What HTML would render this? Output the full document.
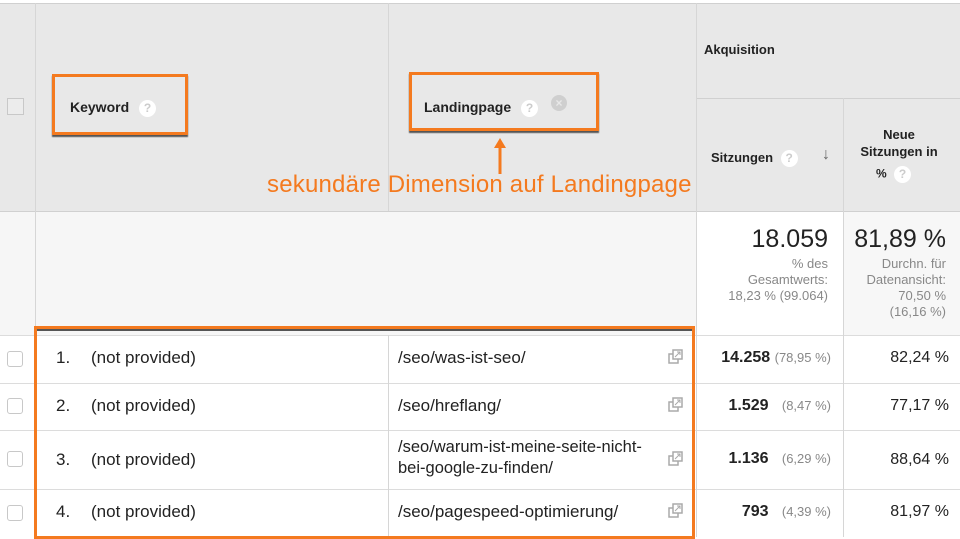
<!DOCTYPE html>
<html><head><meta charset="utf-8"><style>
*{margin:0;padding:0;box-sizing:border-box}
body{width:960px;height:537px;overflow:hidden;background:#fff;font-family:"Liberation Sans",Arial,sans-serif;position:relative;color:#222}
.a{position:absolute}
.vl{position:absolute;width:1px;background:#d6d6d6}
.hl{position:absolute;height:1px;background:#dcdcdc}
.q{display:inline-block;width:17px;height:17px;border-radius:50%;background:#fff;color:#ccc;font-size:12px;text-align:center;line-height:17px;font-weight:bold;vertical-align:middle}
.hd{font-weight:bold;font-size:14px;color:#222}
.cb{position:absolute;left:7px;width:16px;height:16px;border:1px solid #c8c8c8;border-radius:3px;background:#fff}
.t{position:absolute;font-size:17px;color:#222}
.ic{position:absolute;left:668px;width:15px;height:15px}
</style></head><body>
<div class="a" style="left:0;top:3px;width:960px;height:208px;background:#e8e8e8"></div>
<div class="hl" style="left:0;top:3px;width:960px;background:#d0d0d0"></div>
<div class="a" style="left:0;top:211px;width:696px;height:124px;background:#f6f6f6"></div>
<div class="a" style="left:843px;top:211px;width:117px;height:124px;background:#f7f7f7"></div>
<div class="hl" style="left:0;top:211px;width:960px;background:#d0d0d0"></div>
<div class="hl" style="left:696px;top:98px;width:264px;background:#d0d0d0"></div>
<div class="hl" style="left:0;top:335px;width:960px"></div>
<div class="hl" style="left:0;top:383px;width:960px"></div>
<div class="hl" style="left:0;top:430px;width:960px"></div>
<div class="hl" style="left:0;top:489px;width:960px"></div>
<div class="vl" style="left:35px;top:3px;height:534px"></div>
<div class="vl" style="left:388px;top:3px;height:208px"></div>
<div class="vl" style="left:388px;top:335px;height:202px"></div>
<div class="vl" style="left:696px;top:3px;height:534px"></div>
<div class="vl" style="left:843px;top:98px;height:439px"></div>
<div class="cb" style="top:98px;width:17px;height:17px;border-radius:0;background:#ececec"></div>

<div class="a" style="left:52px;top:74px;width:136px;height:61px;border:3px solid #f47a1f;box-shadow:0 2px 1px #555"></div>
<div class="a hd" style="left:70px;top:99px">Keyword <span class="q" style="margin-left:6px">?</span></div>
<div class="a" style="left:409px;top:72px;width:190px;height:59px;border:3px solid #f47a1f;box-shadow:0 2px 1px #555"></div>
<div class="a hd" style="left:424px;top:99px">Landingpage <span class="q" style="margin-left:6px">?</span></div>
<div class="a" style="left:551px;top:95px;width:16px;height:16px;border-radius:50%;background:#cfcfcf;color:#e8e8e8;font-size:12px;text-align:center;line-height:16px;font-weight:bold">×</div>
<svg class="a" style="left:492px;top:136px" width="16" height="40"><path d="M8 38V6" stroke="#f47a1f" stroke-width="3"/><path d="M2 12L8 2L14 12Z" fill="#f47a1f"/></svg>
<div class="a" style="left:267px;top:171px;font-size:24px;color:#f47a1f;letter-spacing:0.2px;white-space:nowrap">sekundäre Dimension auf Landingpage</div>

<div class="a hd" style="left:704px;top:42px;font-size:13px">Akquisition</div>
<div class="a hd" style="left:711px;top:150px;font-size:13px">Sitzungen <span class="q" style="margin-left:4px">?</span></div>
<div class="a" style="left:822px;top:146px;color:#666;font-size:16px;font-weight:bold">↓</div>
<div class="a hd" style="left:845px;top:126px;width:108px;text-align:center;font-size:13px;line-height:17px">Neue<br>Sitzungen in</div>
<div class="a hd" style="left:876px;top:166px;font-size:12px">% <span class="q" style="margin-left:4px">?</span></div>

<div class="a" style="left:700px;top:225px;width:128px;text-align:right;font-size:25px;color:#222">18.059</div>
<div class="a" style="left:700px;top:256px;width:128px;text-align:right;font-size:13px;color:#888;line-height:16px">% des<br>Gesamtwerts:<br>18,23 % (99.064)</div>
<div class="a" style="left:845px;top:225px;width:101px;text-align:right;font-size:25px;color:#222">81,89 %</div>
<div class="a" style="left:845px;top:256px;width:101px;text-align:right;font-size:13px;color:#888;line-height:16px">Durchn. für<br>Datenansicht:<br>70,50 %<br>(16,16 %)</div>

<div class="cb" style="top:351px"></div><div class="cb" style="top:398px"></div><div class="cb" style="top:451px"></div><div class="cb" style="top:505px"></div>
<div class="t" style="left:56px;top:348px">1.</div><div class="t" style="left:91px;top:348px">(not provided)</div><div class="t" style="left:398px;top:348px">/seo/was-ist-seo/</div>
<div class="t" style="left:56px;top:396px">2.</div><div class="t" style="left:91px;top:396px">(not provided)</div><div class="t" style="left:398px;top:396px">/seo/hreflang/</div>
<div class="t" style="left:56px;top:450px">3.</div><div class="t" style="left:91px;top:450px">(not provided)</div><div class="t" style="left:398px;top:437px;line-height:21px;font-size:16.5px">/seo/warum-ist-meine-seite-nicht-<br>bei-google-zu-finden/</div>
<div class="t" style="left:56px;top:502px">4.</div><div class="t" style="left:91px;top:502px">(not provided)</div><div class="t" style="left:398px;top:502px">/seo/pagespeed-optimierung/</div>
<svg class="ic" style="top:349px" viewBox="0 0 15 15"><rect x="1" y="5" width="9" height="9" fill="none" stroke="#aaa" stroke-width="1.5"/><rect x="5" y="1" width="9" height="9" fill="#fff" stroke="#aaa" stroke-width="1.5"/><path d="M7 8L12 3M9 3h3v3" stroke="#aaa" fill="none"/></svg>
<svg class="ic" style="top:397px" viewBox="0 0 15 15"><rect x="1" y="5" width="9" height="9" fill="none" stroke="#aaa" stroke-width="1.5"/><rect x="5" y="1" width="9" height="9" fill="#fff" stroke="#aaa" stroke-width="1.5"/><path d="M7 8L12 3M9 3h3v3" stroke="#aaa" fill="none"/></svg>
<svg class="ic" style="top:451px" viewBox="0 0 15 15"><rect x="1" y="5" width="9" height="9" fill="none" stroke="#aaa" stroke-width="1.5"/><rect x="5" y="1" width="9" height="9" fill="#fff" stroke="#aaa" stroke-width="1.5"/><path d="M7 8L12 3M9 3h3v3" stroke="#aaa" fill="none"/></svg>
<svg class="ic" style="top:503px" viewBox="0 0 15 15"><rect x="1" y="5" width="9" height="9" fill="none" stroke="#aaa" stroke-width="1.5"/><rect x="5" y="1" width="9" height="9" fill="#fff" stroke="#aaa" stroke-width="1.5"/><path d="M7 8L12 3M9 3h3v3" stroke="#aaa" fill="none"/></svg>

<div class="a" style="left:700px;top:349px;width:131px;text-align:right;font-size:16px;white-space:nowrap"><b>14.258</b> <span style="font-size:13px;color:#888">(78,95 %)</span></div>
<div class="a" style="left:700px;top:397px;width:131px;text-align:right;font-size:16px;white-space:nowrap"><b>1.529</b>&nbsp;&nbsp; <span style="font-size:13px;color:#888">(8,47 %)</span></div>
<div class="a" style="left:700px;top:450px;width:131px;text-align:right;font-size:16px;white-space:nowrap"><b>1.136</b>&nbsp;&nbsp; <span style="font-size:13px;color:#888">(6,29 %)</span></div>
<div class="a" style="left:700px;top:503px;width:131px;text-align:right;font-size:16px;white-space:nowrap"><b>793</b>&nbsp;&nbsp; <span style="font-size:13px;color:#888">(4,39 %)</span></div>
<div class="t" style="left:845px;top:349px;width:104px;text-align:right;font-size:16px">82,24 %</div>
<div class="t" style="left:845px;top:397px;width:104px;text-align:right;font-size:16px">77,17 %</div>
<div class="t" style="left:845px;top:451px;width:104px;text-align:right;font-size:16px">88,64 %</div>
<div class="t" style="left:845px;top:503px;width:104px;text-align:right;font-size:16px">81,97 %</div>

<div class="a" style="left:34px;top:326px;width:661px;height:213px;border:3px solid #f47a1f"></div>
<div class="a" style="left:37px;top:329px;width:655px;height:2px;background:#555"></div>
</body></html>
